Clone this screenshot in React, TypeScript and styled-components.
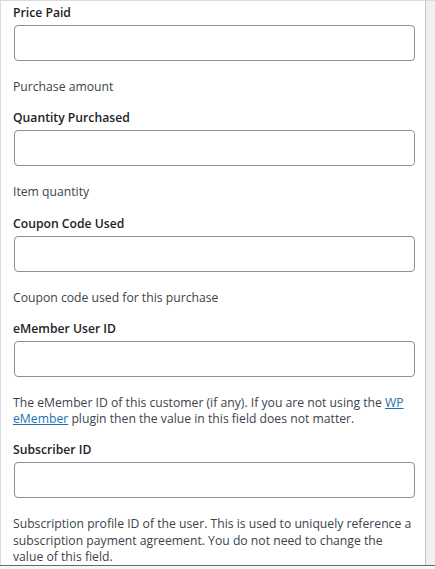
import React from "react";
import styled, { createGlobalStyle } from "styled-components";

const GlobalStyle = createGlobalStyle`
  html, body { margin: 0; padding: 0; background: #ffffff; }
  body { font-family: "Open Sans", "Noto Sans", sans-serif; -webkit-font-smoothing: antialiased; }
  * { box-sizing: border-box; }
`;

const Frame = styled.div`
  width: 435px;
  height: 569px;
  display: flex;
  flex-direction: column;
  overflow: hidden;
  background: #ffffff;
`;

const Main = styled.div`
  flex: 0 0 566px;
  display: flex;
  border-top: 1px solid #dcdcde;
  border-bottom: 1px solid #646970;
  overflow: hidden;
`;

const Box = styled.div`
  width: 426px;
  background: #ffffff;
  border-left: 1px solid #dcdcde;
  border-right: 1px solid #c3c4c7;
  padding: 3px 9px 0 12px;
  display: flex;
  flex-direction: column;
`;

const Gutter = styled.div`
  flex: 1;
  background: #f0f0f1;
`;

const Footer = styled.div`
  flex: 1;
  background: #f6f7f7;
`;

const Field = styled.div`
  display: flex;
  flex-direction: column;
  margin-bottom: 14px;
`;

const Label = styled.label`
  display: block;
  font-size: 12.2px;
  font-weight: 600;
  line-height: 18px;
  color: #1d2327;
`;

const Input = styled.input`
  display: block;
  width: 401px;
  height: 36px;
  margin: 3px 0 0 1px;
  border: 1px solid #8c8f94;
  border-radius: 4px;
  background: #ffffff;
  font-family: inherit;
  font-size: 12px;
  padding: 0 8px;
  outline: none;
`;

const Description = styled.p`
  margin: 18px 0 0 0;
  font-size: 12.2px;
  line-height: 16.3px;
  color: #3c434a;
`;

const Link = styled.a`
  color: #2271b1;
  text-decoration: underline;
`;

const fields: { label: string; desc: React.ReactNode }[] = [
  { label: "Price Paid", desc: "Purchase amount" },
  { label: "Quantity Purchased", desc: "Item quantity" },
  { label: "Coupon Code Used", desc: "Coupon code used for this purchase" },
  {
    label: "eMember User ID",
    desc: (
      <>
        The eMember ID of this customer (if any). If you are not using the{" "}
        <Link href="#">WP eMember</Link> plugin then the value in this field does not matter.
      </>
    ),
  },
  {
    label: "Subscriber ID",
    desc:
      "Subscription profile ID of the user. This is used to uniquely reference a subscription payment agreement. You do not need to change the value of this field.",
  },
];

export default function App() {
  return (
    <>
      <GlobalStyle />
      <Frame>
        <Main>
          <Box>
            {fields.map((f) => (
              <Field key={f.label}>
                <Label>{f.label}</Label>
                <Input type="text" />
                <Description>{f.desc}</Description>
              </Field>
            ))}
          </Box>
          <Gutter />
        </Main>
        <Footer />
      </Frame>
    </>
  );
}
